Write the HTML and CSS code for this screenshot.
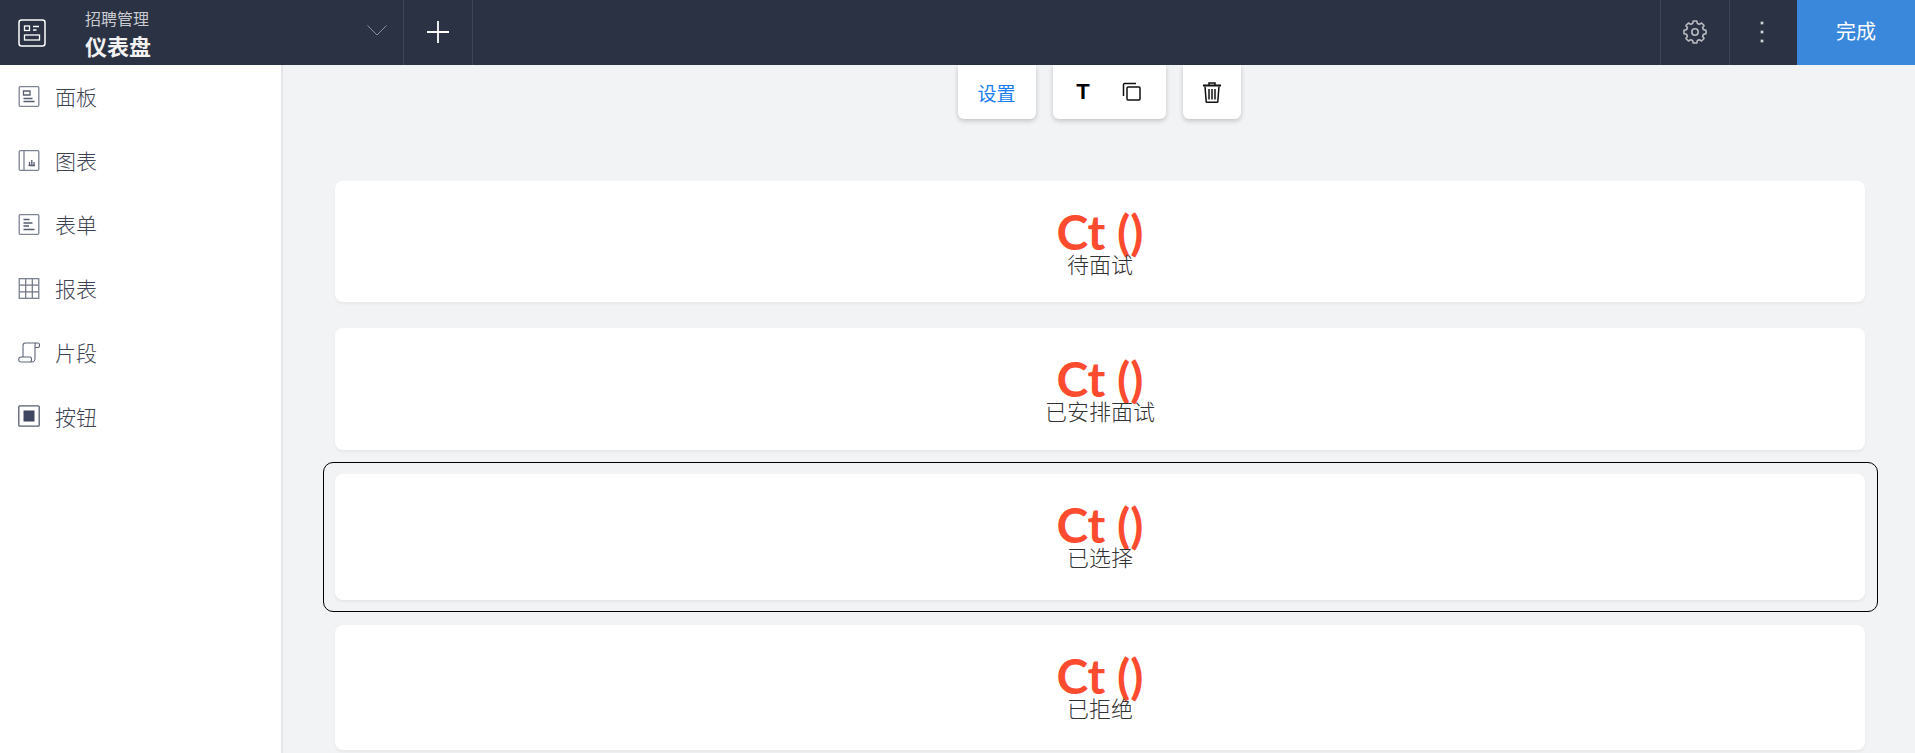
FILE: index.html
```html
<!DOCTYPE html>
<html lang="zh">
<head>
<meta charset="utf-8">
<title>仪表盘</title>
<link rel="stylesheet" href="styles.css">
</head>
<body>
<header class="topbar">
  <div class="app-icon">
    <svg width="28" height="28" viewBox="0 0 28 28" fill="none" stroke="#fff" stroke-width="1.5"><rect x="1" y="1" width="26" height="26" rx="2.5"/><rect x="6.5" y="7" width="5" height="4.5" stroke-width="1.3"/><path d="M15 7.5h6M15 11h3.500" stroke-width="1.300"/><rect x="6.500" y="16" width="15" height="5" stroke-width="1.300"/></svg>
  </div>
  <div class="titles">
    <div class="subtitle">招聘管理</div>
    <div class="title">仪表盘</div>
  </div>
  <div class="cell chevron">
    <svg width="20" height="11" viewBox="0 0 20 11" fill="none" stroke="#8a8f9a" stroke-width="1"><path d="M0.500 0.500L10 10L19.500 0.500"/></svg>
  </div>
  <div class="cell add">
    <svg width="22" height="22" viewBox="0 0 22 22" stroke="#fff" stroke-width="1.800"><path d="M11 0v22M0 11h22"/></svg>
  </div>
  <div class="spacer"></div>
  <div class="cell gear">
    <svg width="24" height="24" viewBox="0 0 24 24" fill="none" stroke="#b9bbc0" stroke-width="1.600" stroke-linejoin="round"><path d="M9.600 3.600L10.200 1H13.800L14.400 3.600L16.240 4.360L18.500 2.950L21.050 5.500L19.640 7.760L20.400 9.600L23 10.200V13.800L20.400 14.400L19.640 16.240L21.050 18.500L18.500 21.050L16.240 19.640L14.400 20.400L13.800 23H10.200L9.600 20.400L7.760 19.640L5.500 21.050L2.950 18.500L4.360 16.240L3.600 14.400L1 13.800V10.200L3.600 9.600L4.360 7.760L2.950 5.500L5.500 2.950L7.760 4.360Z"/><circle cx="12" cy="12" r="3.200"/></svg>
  </div>
  <div class="cell dots"><i></i><i></i><i></i></div>
  <button class="done">完成</button>
</header>
<div class="body">
  <aside class="sidebar">
    <div class="nav-item">
      <svg width="21" height="21" viewBox="0 0 21 21" fill="none" stroke="#7c8291" stroke-width="1.300"><rect x=".700" y=".700" width="19.600" height="19.600" rx="1"/><path d="M5 5h6.500v4H5zM5 12.500h9M5 15.500h11" stroke="#555c6d"/></svg>
      <span>面板</span>
    </div>
    <div class="nav-item">
      <svg width="21" height="21" viewBox="0 0 21 21" fill="none" stroke="#7c8291" stroke-width="1.300"><rect x=".700" y=".700" width="19.600" height="19.600" rx="1"/><path d="M5.500 1v19"/><path d="M10 15.500h6.500M11 15v-3M13.300 15v-5M15.500 15v-3" stroke="#555c6d"/></svg>
      <span>图表</span>
    </div>
    <div class="nav-item">
      <svg width="21" height="21" viewBox="0 0 21 21" fill="none" stroke="#7c8291" stroke-width="1.300"><rect x=".700" y=".700" width="19.600" height="19.600" rx="1"/><path d="M5 5.500h6M5 9h9M5 12h5.500M5 15.500h11" stroke="#555c6d"/></svg>
      <span>表单</span>
    </div>
    <div class="nav-item">
      <svg width="21" height="21" viewBox="0 0 21 21" fill="none" stroke="#6f7585" stroke-width="1.200"><rect x=".700" y=".700" width="19.600" height="19.600"/><path d="M7.200 1v19M13.800 1v19M1 7.200h19M1 13.800h19"/></svg>
      <span>报表</span>
    </div>
    <div class="nav-item">
      <svg width="22" height="21" viewBox="0 0 22 21" fill="none" stroke="#5d6475" stroke-width="1.100"><path d="M5 15V3.500C5 2 6 1 7.500 1h12.500M20 1c1 0 1.500 1 1.500 2s-.5 2.500-1.500 2.500h-3V3c0-1 .5-2 1.500-2M17 5v11.500c0 2-1.500 3.500-3 3.500H3C1.500 20 .700 18.800.700 17.500S1.500 15 3 15h9c1 0 1.500 1 1.500 2.500s-.5 2.500-1.500 2.500"/></svg>
      <span>片段</span>
    </div>
    <div class="nav-item">
      <svg width="22" height="22" viewBox="0 0 22 22"><rect x=".800" y=".800" width="20.400" height="20.400" rx="1" fill="none" stroke="#555c6d" stroke-width="1.300"/><rect x="5.500" y="5.500" width="11" height="11" fill="#3e4660"/></svg>
      <span>按钮</span>
    </div>
  </aside>
  <main class="canvas">
    <div class="toolbar">
      <div class="tool-box settings">设置</div>
      <div class="tool-box pair">
        <span class="tool-t">T</span>
        <svg width="20" height="20" viewBox="0 0 20 20" fill="none" stroke="#111" stroke-width="1.500"><rect x="5" y="5" width="13" height="13" rx="1"/><path d="M1.500 14V2.500c0-.6.400-1 1-1H14"/></svg>
      </div>
      <div class="tool-box trash">
        <svg width="18" height="21" viewBox="0 0 18 21" fill="none" stroke="#111" stroke-width="1.500"><path d="M0 3.500h18" stroke-width="2"/><path d="M6 3V1h6v2" /><path d="M2 4.500l1.200 15c0 .5.300.8.800.8h10c.5 0 .8-.3.800-.8L16 4.500M6 7v10.500M9 7v10.500M12 7v10.500"/></svg>
      </div>
    </div>
    <div class="widget w1"><div class="card"><div class="metric">Ct ()</div><div class="label">待面试</div></div></div>
    <div class="widget w2"><div class="card"><div class="metric">Ct ()</div><div class="label">已安排面试</div></div></div>
    <div class="widget w3 selected"><div class="card"><div class="metric">Ct ()</div><div class="label">已选择</div></div></div>
    <div class="widget w4"><div class="card"><div class="metric">Ct ()</div><div class="label">已拒绝</div></div></div>
  </main>
</div>
</body>
</html>
```
FILE: styles.css
```css
* { box-sizing: border-box; }
html, body { margin: 0; height: 100%; overflow: hidden; }
body {
  font-family: "Noto Sans CJK SC", "Noto Sans", sans-serif;
  background: #f2f3f5;
  display: flex;
  flex-direction: column;
  height: 753px;
}
.topbar {
  height: 65px;
  flex: none;
  background: #2b3243;
  display: flex;
  align-items: stretch;
  color: #fff;
}
.app-icon {
  width: 85px;
  padding-left: 18px;
  display: flex;
  align-items: center;
}
.titles {
  width: 271px;
  padding-top: 7px;
  display: flex;
  flex-direction: column;
}
.subtitle { font-size: 16px; line-height: 23px; color: #c9cbd0; }
.title { font-size: 22px; line-height: 30px; font-weight: 700; color: #f2f2f2; }
.cell {
  display: flex;
  align-items: center;
  justify-content: center;
  border-right: 1px solid #3d4558;
}
.chevron { width: 48px; padding: 0 16px 4px 0; justify-content: flex-end; }
.add { width: 69px; padding-bottom: 2px; }
.spacer { flex: 1; }
.gear { width: 70px; border-left: 1px solid #3d4558; border-right: 1px solid #3d4558; padding-bottom: 1px; }
.dots {
  width: 67px;
  border-right: 0;
  flex-direction: column;
  gap: 7px;
  padding: 0 3px 2px 0;
}
.dots i { width: 2px; height: 2px; background: #d3d5d8; box-shadow: 0 0 0 .5px #9a9da5; }
.done {
  width: 118px;
  border: 0;
  padding: 0 0 4px;
  background: #3a88dc;
  color: #fff;
  font: 20px "Noto Sans CJK SC", sans-serif;
}
.body { flex: 1; display: flex; min-height: 0; }
.sidebar {
  width: 283px;
  flex: none;
  background: #fff;
  border-right: 2px solid #e4e6ea;
}
.nav-item {
  height: 64px;
  display: flex;
  align-items: center;
  gap: 15px;
  padding: 0 0 2px 18px;
  color: #3e4454;
  font-size: 21px;
  font-weight: 300;
}
.nav-item svg { width: 22px; flex: none; }
.canvas {
  flex: 1;
  min-width: 0;
  padding: 0 38px 0 40px;
  display: flex;
  flex-direction: column;
}
.toolbar {
  height: 54px;
  flex: none;
  margin-bottom: 50px;
  padding-right: 2px;
  display: flex;
  justify-content: center;
  gap: 17px;
}
.tool-box {
  background: #fff;
  border-radius: 0 0 6px 6px;
  box-shadow: 0 2px 5px rgba(0, 0, 0, .2);
  display: flex;
  align-items: center;
  justify-content: center;
}
.settings { width: 78px; color: #1a7df0; font-size: 19px; }
.pair { width: 113px; gap: 30px; padding-right: 2px; }
.tool-t { font: 700 22px "Liberation Sans", sans-serif; color: #000; width: 18px; text-align: center; }
.trash { width: 58px; }
.widget { border: 1px solid transparent; border-radius: 10px; padding: 11px; flex: none; }
.selected { border-color: #000; margin-right: -1px; padding-right: 12px; }
.w1 { height: 145px; margin-bottom: 2px; }
.w2 { height: 146px; }
.w3 { height: 150px; margin-bottom: 1px; }
.w4 { height: 149px; }
.card {
  height: 100%;
  background: #fff;
  border-radius: 8px;
  box-shadow: 0 2px 3px rgba(0, 0, 0, .05);
  display: flex;
  flex-direction: column;
  align-items: center;
  padding-top: 27px;
}
.metric {
  font-family: "Lato", sans-serif;
  font-size: 48px;
  line-height: 48px;
  font-weight: 700;
  color: #fd4b2f;
}
.label {
  font-size: 22px;
  line-height: 26px;
  margin-top: -6px;
  color: #333;
  font-weight: 300;
}
```
